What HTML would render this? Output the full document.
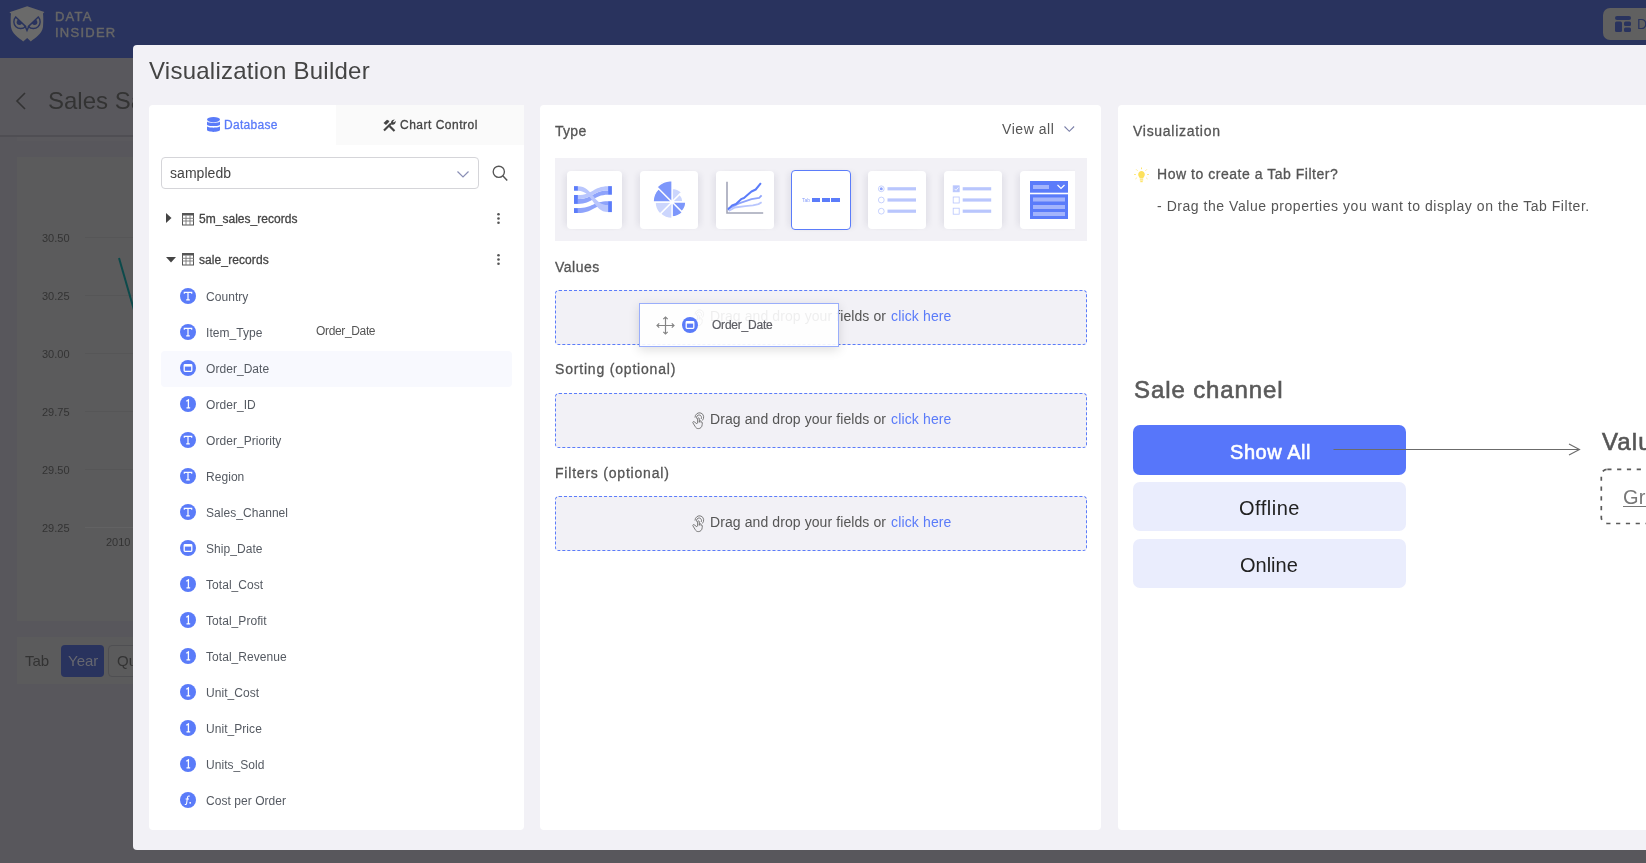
<!DOCTYPE html>
<html><head><meta charset="utf-8">
<style>
*{box-sizing:border-box;margin:0;padding:0}
html,body{width:1646px;height:863px;overflow:hidden}
body{position:relative;background:#58575c;font-family:"Liberation Sans",sans-serif;color:#444}
.a{position:absolute}
.t{position:absolute;white-space:nowrap;will-change:transform}
svg{display:block;overflow:visible}
</style></head><body>

<div class="a" style="left:0px;top:0px;width:1646px;height:58px;background:#29335e"></div>
<svg class="a" style="left:9px;top:6px;" width="36" height="37" viewBox="0 0 36 37"><defs><clipPath id="ce1"><path d="M6.7 11.1 A6 6 0 1 0 16.5 20.4Z"/></clipPath><clipPath id="ce2"><path d="M29.3 11.1 A6 6 0 1 1 19.5 20.4Z"/></clipPath></defs>
<path d="M18.2 0.2 L35.4 6 L34 7.5 C34.5 12 34.3 18 34 21 C33 28 26 32 21.8 35.4 L18.2 32 L14.2 35.4 C10 32 3 28 2 21 C1.7 18 1.5 12 2 7.5 L0.4 6.2 Z" fill="#6a6a6a"/>
<path d="M6.7 11.1 A6 6 0 1 0 16.5 20.4Z" fill="none" stroke="#29335e" stroke-width="1.4"/>
<path d="M29.3 11.1 A6 6 0 1 1 19.5 20.4Z" fill="none" stroke="#29335e" stroke-width="1.4"/>
<circle cx="10.4" cy="16.2" r="2.7" fill="#29335e" clip-path="url(#ce1)"/>
<circle cx="25.6" cy="16.2" r="2.7" fill="#29335e" clip-path="url(#ce2)"/>
<path d="M16 20 L18 24.4 L20 20" fill="none" stroke="#29335e" stroke-width="1.5"/></svg>
<div class="t" style="left:54.50px;top:10.30px;font-size:13px;line-height:13px;color:#666;-webkit-text-stroke:0.45px #666;letter-spacing:1.2px;">DATA</div>
<div class="t" style="left:54.50px;top:26.40px;font-size:13px;line-height:13px;color:#666;-webkit-text-stroke:0.45px #666;letter-spacing:1.25px;">INSIDER</div>
<div class="a" style="left:1603px;top:8px;width:80px;height:32px;background:#606060;border-radius:7px"></div>
<svg class="a" style="left:1615px;top:16px;" width="16" height="16" viewBox="0 0 16 16"><rect x="0" y="0" width="16" height="4" rx="2" fill="#29335e"/>
<rect x="0" y="5.5" width="7" height="10.5" rx="1.5" fill="#29335e"/>
<rect x="9" y="5.5" width="7" height="4.5" rx="1.5" fill="#29335e"/>
<rect x="9" y="11.5" width="7" height="4.5" rx="1.5" fill="#29335e"/></svg>
<div class="t" style="left:1637.00px;top:17.15px;font-size:14px;line-height:14px;color:#29335e;">D</div>
<div class="a" style="left:0px;top:58px;width:1646px;height:78px;background:#59585d"></div>
<div class="a" style="left:0px;top:135px;width:1646px;height:2px;background:#4f4e53"></div>
<div class="a" style="left:17px;top:137px;width:1629px;height:4px;background:#5a595d"></div>
<svg class="a" style="left:15px;top:92px;" width="12" height="18" viewBox="0 0 12 18"><path d="M10 1 L2 9 L10 17" fill="none" stroke="#333" stroke-width="1.6"/></svg>
<div class="t" style="left:48.00px;top:88.68px;font-size:24px;line-height:24px;color:#333;">Sales Sa</div>
<div class="a" style="left:17px;top:157px;width:1629px;height:464px;background:#5b5b5c"></div>
<div class="t" style="left:42.00px;top:232.69px;font-size:11px;line-height:11px;color:#333;">30.50</div>
<div class="a" style="left:85px;top:237px;width:60px;height:1px;background:#565657"></div>
<div class="t" style="left:42.00px;top:290.69px;font-size:11px;line-height:11px;color:#333;">30.25</div>
<div class="a" style="left:85px;top:295px;width:60px;height:1px;background:#565657"></div>
<div class="t" style="left:42.00px;top:348.69px;font-size:11px;line-height:11px;color:#333;">30.00</div>
<div class="a" style="left:85px;top:353px;width:60px;height:1px;background:#565657"></div>
<div class="t" style="left:42.00px;top:406.69px;font-size:11px;line-height:11px;color:#333;">29.75</div>
<div class="a" style="left:85px;top:411px;width:60px;height:1px;background:#565657"></div>
<div class="t" style="left:42.00px;top:464.69px;font-size:11px;line-height:11px;color:#333;">29.50</div>
<div class="a" style="left:85px;top:469px;width:60px;height:1px;background:#565657"></div>
<div class="t" style="left:42.00px;top:522.69px;font-size:11px;line-height:11px;color:#333;">29.25</div>
<div class="a" style="left:85px;top:527px;width:60px;height:1px;background:#626263"></div>
<div class="t" style="left:106.00px;top:536.69px;font-size:11px;line-height:11px;color:#333;">2010</div>
<svg class="a" style="left:110px;top:250px;" width="30" height="70" viewBox="0 0 30 70"><path d="M9 8 L24 60" stroke="#0c4a4b" stroke-width="2"/></svg>
<div class="a" style="left:17px;top:637px;width:1629px;height:47px;background:#5b5b5c"></div>
<div class="t" style="left:25.00px;top:653.30px;font-size:15px;line-height:15px;color:#333;">Tab</div>
<div class="a" style="left:61px;top:645px;width:43px;height:32px;background:#29335e;border-radius:4px"></div>
<div class="t" style="left:68.00px;top:653.30px;font-size:15px;line-height:15px;color:#66676f;">Year</div>
<div class="a" style="left:108px;top:645px;width:60px;height:32px;border:1px solid #4f4f52;border-radius:4px"></div>
<div class="t" style="left:117.00px;top:653.30px;font-size:15px;line-height:15px;color:#333;">Qu</div>
<div class="a" style="left:133px;top:45px;width:1600px;height:805px;background:#f2f1f6;border-radius:4px"></div>
<div class="t" style="left:148.50px;top:58.68px;font-size:24px;line-height:24px;color:#444;letter-spacing:0.25px;">Visualization Builder</div>
<div class="a" style="left:149px;top:105px;width:375px;height:725px;background:#fff;border-radius:4px 0 4px 4px"></div>
<div class="a" style="left:540px;top:105px;width:561px;height:725px;background:#fff;border-radius:4px"></div>
<div class="a" style="left:1118px;top:105px;width:600px;height:725px;background:#fff;border-radius:4px"></div>
<div class="a" style="left:336px;top:105px;width:188px;height:40px;background:#fafafa"></div>
<svg class="a" style="left:207px;top:117px;" width="13" height="16" viewBox="0 0 13 16"><ellipse cx="6.5" cy="2.6" rx="6.5" ry="2.6" fill="#5a7bf9"/>
<path d="M0 4.2 C0 6.2 13 6.2 13 4.2 L13 7.4 C13 9.6 0 9.6 0 7.4Z" fill="#5a7bf9"/>
<path d="M0 9 C0 11.2 13 11.2 13 9 L13 12.8 C13 15.6 0 15.6 0 12.8Z" fill="#5a7bf9"/></svg>
<div class="t" style="left:224.30px;top:118.84px;font-size:12px;line-height:12px;color:#5a7bf9;-webkit-text-stroke:0.3px #5a7bf9;letter-spacing:0.31px;">Database</div>
<svg class="a" style="left:383px;top:118.5px;" width="13" height="12.5" viewBox="0 0 13 12.5"><path d="M1 11.5 L8 4.5" stroke="#444" stroke-width="2.2"/>
<path d="M6.5 7 L11.5 12" stroke="#444" stroke-width="2.2"/>
<path d="M0.5 4 L4 0.8 L6.5 2 L5.5 3.5 L3 6Z" fill="#444"/>
<path d="M8.5 5.5 C7.2 3.5 8.5 0.5 11.8 0.6 L10 2.6 L10.8 3.5 L12.7 1.8 C13 5 10.5 6.5 8.5 5.5Z" fill="#444"/></svg>
<div class="t" style="left:399.70px;top:118.64px;font-size:12px;line-height:12px;color:#444;-webkit-text-stroke:0.3px #444;letter-spacing:0.5px;">Chart Control</div>
<div class="a" style="left:161px;top:157px;width:318px;height:32px;border:1px solid #d5d5d9;border-radius:4px;background:#fff"></div>
<div class="t" style="left:169.50px;top:166.15px;font-size:14px;line-height:14px;color:#444;letter-spacing:0.05px;">sampledb</div>
<svg class="a" style="left:457px;top:170.5px;" width="12" height="6.5" viewBox="0 0 12 6.5"><path d="M0.5 0.5 L6 6 L11.5 0.5" fill="none" stroke="#8a8fb5" stroke-width="1.2"/></svg>
<svg class="a" style="left:491.5px;top:164.6px;" width="16" height="16" viewBox="0 0 16 16"><circle cx="6.8" cy="6.8" r="5.6" fill="none" stroke="#555" stroke-width="1.35"/><path d="M10.8 10.8 L15.2 15.4" stroke="#555" stroke-width="1.5"/></svg>
<svg class="a" style="left:166px;top:213px;" width="6" height="10" viewBox="0 0 6 10"><path d="M0 0 L5.5 5 L0 10Z" fill="#444"/></svg>
<svg class="a" style="left:166px;top:257px;" width="10" height="6" viewBox="0 0 10 6"><path d="M0 0 L10 0 L5 5.5Z" fill="#444"/></svg>
<svg class="a" style="left:182px;top:212.6px;" width="12" height="12.5" viewBox="0 0 12 12.5"><rect x="0.5" y="0.5" width="11" height="11.5" fill="none" stroke="#555" stroke-width="1"/>
<rect x="0" y="0" width="12" height="2.5" fill="#555"/>
<path d="M0 5.3 H12 M0 8 H12 M4 2.5 V12 M8 2.5 V12" stroke="#777" stroke-width="0.9"/></svg>
<svg class="a" style="left:182px;top:253.4px;" width="12" height="12.5" viewBox="0 0 12 12.5"><rect x="0.5" y="0.5" width="11" height="11.5" fill="none" stroke="#555" stroke-width="1"/>
<rect x="0" y="0" width="12" height="2.5" fill="#555"/>
<path d="M0 5.3 H12 M0 8 H12 M4 2.5 V12 M8 2.5 V12" stroke="#777" stroke-width="0.9"/></svg>
<div class="t" style="left:198.50px;top:212.84px;font-size:12px;line-height:12px;color:#444;-webkit-text-stroke:0.3px #444;letter-spacing:0.03px;">5m_sales_records</div>
<div class="t" style="left:198.50px;top:253.84px;font-size:12px;line-height:12px;color:#444;-webkit-text-stroke:0.3px #444;letter-spacing:0.09px;">sale_records</div>
<svg class="a" style="left:496.5px;top:213.4px;" width="3" height="11" viewBox="0 0 3 11"><circle cx="1.5" cy="1.3" r="1.3" fill="#555"/><circle cx="1.5" cy="5.5" r="1.3" fill="#555"/><circle cx="1.5" cy="9.7" r="1.3" fill="#555"/></svg>
<svg class="a" style="left:496.5px;top:254.4px;" width="3" height="11" viewBox="0 0 3 11"><circle cx="1.5" cy="1.3" r="1.3" fill="#555"/><circle cx="1.5" cy="5.5" r="1.3" fill="#555"/><circle cx="1.5" cy="9.7" r="1.3" fill="#555"/></svg>
<div class="a" style="left:161px;top:351px;width:351px;height:36px;background:#f8f9fe;border-radius:4px"></div>
<svg class="a" style="left:180px;top:288.0px;" width="16" height="16" viewBox="0 0 16 16"><circle cx="8" cy="8" r="8" fill="#5a7bf9"/><path d="M4.3 5.8 V4.3 H11.7 V5.8 M8 4.3 V11.8 M6.2 11.8 H9.8" fill="none" stroke="#fff" stroke-width="1.2"/></svg>
<div class="t" style="left:205.50px;top:291.14px;font-size:12px;line-height:12px;color:#555a62;letter-spacing:0.05px;">Country</div>
<svg class="a" style="left:180px;top:324.0px;" width="16" height="16" viewBox="0 0 16 16"><circle cx="8" cy="8" r="8" fill="#5a7bf9"/><path d="M4.3 5.8 V4.3 H11.7 V5.8 M8 4.3 V11.8 M6.2 11.8 H9.8" fill="none" stroke="#fff" stroke-width="1.2"/></svg>
<div class="t" style="left:205.50px;top:327.14px;font-size:12px;line-height:12px;color:#555a62;letter-spacing:0.05px;">Item_Type</div>
<svg class="a" style="left:180px;top:360.0px;" width="16" height="16" viewBox="0 0 16 16"><circle cx="8" cy="8" r="8" fill="#5a7bf9"/><rect x="4.2" y="4.6" width="7.6" height="6.8" rx="0.8" fill="none" stroke="#fff" stroke-width="1.3"/><rect x="4.2" y="4.6" width="7.6" height="2" fill="#fff"/></svg>
<div class="t" style="left:205.50px;top:363.14px;font-size:12px;line-height:12px;color:#555a62;letter-spacing:0.05px;">Order_Date</div>
<svg class="a" style="left:180px;top:396.0px;" width="16" height="16" viewBox="0 0 16 16"><circle cx="8" cy="8" r="8" fill="#5a7bf9"/><path d="M6.3 5.3 L8.4 4 V11.8 M6.5 11.8 H10.2" fill="none" stroke="#fff" stroke-width="1.3"/></svg>
<div class="t" style="left:205.50px;top:399.14px;font-size:12px;line-height:12px;color:#555a62;letter-spacing:0.05px;">Order_ID</div>
<svg class="a" style="left:180px;top:432.0px;" width="16" height="16" viewBox="0 0 16 16"><circle cx="8" cy="8" r="8" fill="#5a7bf9"/><path d="M4.3 5.8 V4.3 H11.7 V5.8 M8 4.3 V11.8 M6.2 11.8 H9.8" fill="none" stroke="#fff" stroke-width="1.2"/></svg>
<div class="t" style="left:205.50px;top:435.14px;font-size:12px;line-height:12px;color:#555a62;letter-spacing:0.05px;">Order_Priority</div>
<svg class="a" style="left:180px;top:468.0px;" width="16" height="16" viewBox="0 0 16 16"><circle cx="8" cy="8" r="8" fill="#5a7bf9"/><path d="M4.3 5.8 V4.3 H11.7 V5.8 M8 4.3 V11.8 M6.2 11.8 H9.8" fill="none" stroke="#fff" stroke-width="1.2"/></svg>
<div class="t" style="left:205.50px;top:471.14px;font-size:12px;line-height:12px;color:#555a62;letter-spacing:0.05px;">Region</div>
<svg class="a" style="left:180px;top:503.99999999999994px;" width="16" height="16" viewBox="0 0 16 16"><circle cx="8" cy="8" r="8" fill="#5a7bf9"/><path d="M4.3 5.8 V4.3 H11.7 V5.8 M8 4.3 V11.8 M6.2 11.8 H9.8" fill="none" stroke="#fff" stroke-width="1.2"/></svg>
<div class="t" style="left:205.50px;top:507.14px;font-size:12px;line-height:12px;color:#555a62;letter-spacing:0.05px;">Sales_Channel</div>
<svg class="a" style="left:180px;top:540.0px;" width="16" height="16" viewBox="0 0 16 16"><circle cx="8" cy="8" r="8" fill="#5a7bf9"/><rect x="4.2" y="4.6" width="7.6" height="6.8" rx="0.8" fill="none" stroke="#fff" stroke-width="1.3"/><rect x="4.2" y="4.6" width="7.6" height="2" fill="#fff"/></svg>
<div class="t" style="left:205.50px;top:543.14px;font-size:12px;line-height:12px;color:#555a62;letter-spacing:0.05px;">Ship_Date</div>
<svg class="a" style="left:180px;top:576.0px;" width="16" height="16" viewBox="0 0 16 16"><circle cx="8" cy="8" r="8" fill="#5a7bf9"/><path d="M6.3 5.3 L8.4 4 V11.8 M6.5 11.8 H10.2" fill="none" stroke="#fff" stroke-width="1.3"/></svg>
<div class="t" style="left:205.50px;top:579.14px;font-size:12px;line-height:12px;color:#555a62;letter-spacing:0.05px;">Total_Cost</div>
<svg class="a" style="left:180px;top:612.0px;" width="16" height="16" viewBox="0 0 16 16"><circle cx="8" cy="8" r="8" fill="#5a7bf9"/><path d="M6.3 5.3 L8.4 4 V11.8 M6.5 11.8 H10.2" fill="none" stroke="#fff" stroke-width="1.3"/></svg>
<div class="t" style="left:205.50px;top:615.14px;font-size:12px;line-height:12px;color:#555a62;letter-spacing:0.05px;">Total_Profit</div>
<svg class="a" style="left:180px;top:648.0px;" width="16" height="16" viewBox="0 0 16 16"><circle cx="8" cy="8" r="8" fill="#5a7bf9"/><path d="M6.3 5.3 L8.4 4 V11.8 M6.5 11.8 H10.2" fill="none" stroke="#fff" stroke-width="1.3"/></svg>
<div class="t" style="left:205.50px;top:651.14px;font-size:12px;line-height:12px;color:#555a62;letter-spacing:0.05px;">Total_Revenue</div>
<svg class="a" style="left:180px;top:684.0px;" width="16" height="16" viewBox="0 0 16 16"><circle cx="8" cy="8" r="8" fill="#5a7bf9"/><path d="M6.3 5.3 L8.4 4 V11.8 M6.5 11.8 H10.2" fill="none" stroke="#fff" stroke-width="1.3"/></svg>
<div class="t" style="left:205.50px;top:687.14px;font-size:12px;line-height:12px;color:#555a62;letter-spacing:0.05px;">Unit_Cost</div>
<svg class="a" style="left:180px;top:720.0px;" width="16" height="16" viewBox="0 0 16 16"><circle cx="8" cy="8" r="8" fill="#5a7bf9"/><path d="M6.3 5.3 L8.4 4 V11.8 M6.5 11.8 H10.2" fill="none" stroke="#fff" stroke-width="1.3"/></svg>
<div class="t" style="left:205.50px;top:723.14px;font-size:12px;line-height:12px;color:#555a62;letter-spacing:0.05px;">Unit_Price</div>
<svg class="a" style="left:180px;top:756.0px;" width="16" height="16" viewBox="0 0 16 16"><circle cx="8" cy="8" r="8" fill="#5a7bf9"/><path d="M6.3 5.3 L8.4 4 V11.8 M6.5 11.8 H10.2" fill="none" stroke="#fff" stroke-width="1.3"/></svg>
<div class="t" style="left:205.50px;top:759.14px;font-size:12px;line-height:12px;color:#555a62;letter-spacing:0.05px;">Units_Sold</div>
<svg class="a" style="left:180px;top:792.0px;" width="16" height="16" viewBox="0 0 16 16"><circle cx="8" cy="8" r="8" fill="#5a7bf9"/><path d="M9.8 4.2 C8.2 3.6 7.6 4.6 7.4 6 L6.6 11.5 C6.4 12.6 5.6 12.6 4.8 12.2 M5.6 7 H9" fill="none" stroke="#fff" stroke-width="1.1"/><circle cx="10.2" cy="10.8" r="0.9" fill="#fff"/></svg>
<div class="t" style="left:205.50px;top:795.14px;font-size:12px;line-height:12px;color:#555a62;letter-spacing:0.05px;">Cost per Order</div>
<div class="t" style="left:316.30px;top:324.84px;font-size:12px;line-height:12px;color:#555;letter-spacing:-0.35px;">Order_Date</div>
<div class="t" style="left:555.00px;top:124.15px;font-size:14px;line-height:14px;color:#555;-webkit-text-stroke:0.3px #555;letter-spacing:0.27px;">Type</div>
<div class="t" style="left:1001.70px;top:121.95px;font-size:14px;line-height:14px;color:#555;letter-spacing:0.55px;">View all</div>
<svg class="a" style="left:1063.5px;top:126.3px;" width="11" height="6" viewBox="0 0 11 6"><path d="M0.5 0.5 L5.3 5.3 L10.1 0.5" fill="none" stroke="#7a7fa8" stroke-width="1.1"/></svg>
<div class="a" style="left:555px;top:158px;width:532px;height:83px;background:#f2f1f6"></div>
<div class="a" style="left:555px;top:158px;width:520px;height:83px;overflow:hidden">
<div class="a" style="left:12px;top:13px;width:55px;height:58px;background:#fff;border-radius:4px;box-shadow:5px 0 6px -3px rgba(30,30,70,0.09),-5px 0 6px -3px rgba(30,30,70,0.09);"></div>
<div class="a" style="left:85px;top:13px;width:58px;height:58px;background:#fff;border-radius:4px;box-shadow:5px 0 6px -3px rgba(30,30,70,0.09),-5px 0 6px -3px rgba(30,30,70,0.09);"></div>
<div class="a" style="left:161px;top:13px;width:58px;height:58px;background:#fff;border-radius:4px;box-shadow:5px 0 6px -3px rgba(30,30,70,0.09),-5px 0 6px -3px rgba(30,30,70,0.09);"></div>
<div class="a" style="left:236px;top:12.3px;width:59.5px;height:59.5px;background:#fff;border-radius:4px;box-shadow:5px 0 6px -3px rgba(30,30,70,0.09),-5px 0 6px -3px rgba(30,30,70,0.09);border:1.5px solid #5b7cfa;"></div>
<div class="a" style="left:313px;top:13px;width:58px;height:58px;background:#fff;border-radius:4px;box-shadow:5px 0 6px -3px rgba(30,30,70,0.09),-5px 0 6px -3px rgba(30,30,70,0.09);"></div>
<div class="a" style="left:389px;top:13px;width:58px;height:58px;background:#fff;border-radius:4px;box-shadow:5px 0 6px -3px rgba(30,30,70,0.09),-5px 0 6px -3px rgba(30,30,70,0.09);"></div>
<div class="a" style="left:464.5px;top:13px;width:58px;height:58px;background:#fff;border-radius:4px;box-shadow:5px 0 6px -3px rgba(30,30,70,0.09),-5px 0 6px -3px rgba(30,30,70,0.09);"></div>
</div>
<svg class="a" style="left:574px;top:186px;" width="38" height="27" viewBox="0 0 38 27"><path d="M3.9 13 C19.0 13 19.0 4.4 34.1 4.4 L34.1 8.7 C19.0 8.7 19.0 17.9 3.9 17.9Z" fill="#8ea3fb"/><path d="M3.9 22.1 C19.0 22.1 19.0 15.2 34.1 15.2 L34.1 19 C19.0 19 19.0 27 3.9 27Z" fill="#8ea3fb"/><path d="M3.9 0.13 C19.0 0.13 19.0 19 34.1 19 L34.1 26 C19.0 26 19.0 4.7 3.9 4.7Z" fill="#b9c6fd"/><path d="M3.9 9 C19.0 9 19.0 0.13 34.1 0.13 L34.1 4.4 C19.0 4.4 19.0 13 3.9 13Z" fill="#b9c6fd"/><rect x="0" y="0.13" width="3.9" height="4.6" fill="#5b7cfa"/>
<rect x="0" y="9" width="3.9" height="8.9" fill="#5b7cfa"/>
<rect x="0" y="22.1" width="3.9" height="4.9" fill="#5b7cfa"/>
<rect x="34.1" y="0.13" width="3.8" height="8.6" fill="#5b7cfa"/>
<rect x="34.1" y="15.2" width="3.8" height="10.9" fill="#5b7cfa"/></svg>
<svg class="a" style="left:652px;top:180px;" width="40" height="44" viewBox="0 0 40 44"><path d="M20 22 L20.00 8.30 A13.7 13.7 0 0 1 29.69 12.31Z" fill="#ccd6fd" stroke="#fff" stroke-width="1.3"/><path d="M20 22 L27.78 14.22 A11 11 0 0 1 31.00 22.00Z" fill="#ccd6fd" stroke="#fff" stroke-width="1.3"/><path d="M20 22 L33.80 22.00 A13.8 13.8 0 0 1 29.76 31.76Z" fill="#7d97fb" stroke="#fff" stroke-width="1.3"/><path d="M20 22 L30.47 32.47 A14.8 14.8 0 0 1 20.00 36.80Z" fill="#7d97fb" stroke="#fff" stroke-width="1.3"/><path d="M20 22 L20.00 38.50 A16.5 16.5 0 0 1 8.33 33.67Z" fill="#ccd6fd" stroke="#fff" stroke-width="1.3"/><path d="M20 22 L7.98 34.02 A17 17 0 0 1 3.00 22.00Z" fill="#ccd6fd" stroke="#fff" stroke-width="1.3"/><path d="M20 22 L1.10 22.00 A18.9 18.9 0 0 1 6.64 8.64Z" fill="#7d97fb" stroke="#fff" stroke-width="1.3"/><path d="M20 22 L4.94 6.94 A21.3 21.3 0 0 1 20.00 0.70Z" fill="#7d97fb" stroke="#fff" stroke-width="1.3"/></svg>
<svg class="a" style="left:725px;top:180px;" width="40" height="35" viewBox="0 0 40 35"><path d="M2 1.8 V33 H38.2" fill="none" stroke="#a3a6b8" stroke-width="1.6"/>
<path d="M3.6 31 L9.9 27.5 L20.3 26.1 L27.9 25.4 L33.5 24.1 L36.6 22.3" fill="none" stroke="#b9c6fd" stroke-width="1.8" stroke-linejoin="round"/>
<path d="M2.9 28.9 L14 23.4 L26.5 19.2 L34.2 17.8 L36.6 15.4" fill="none" stroke="#8ea3fb" stroke-width="1.8" stroke-linejoin="round"/>
<path d="M2.9 29.6 L7.1 25.4 L11 24 L16.1 19.2 L19 18 L22.4 15 L26.5 11.5 L30.7 9.5 L35.9 3.2" fill="none" stroke="#5b7cfa" stroke-width="2" stroke-linejoin="round"/></svg>
<div class="t" style="left:802.00px;top:198.27px;font-size:5px;line-height:5px;color:#8aa0fb;">Tab</div>
<div class="a" style="left:811.5px;top:198.4px;width:8.5px;height:3.7px;background:#5b7cfa"></div>
<div class="a" style="left:821.5px;top:198.4px;width:8.5px;height:3.7px;background:#5b7cfa"></div>
<div class="a" style="left:831.3px;top:198.4px;width:8.7px;height:3.7px;background:#5b7cfa"></div>
<svg class="a" style="left:866px;top:180px;" width="40" height="40" viewBox="0 0 40 40"><circle cx="15.299999999999955" cy="8.800000000000011" r="2.9" fill="none" stroke="#b9c6fd" stroke-width="0.8"/><circle cx="15.299999999999955" cy="8.800000000000011" r="1.5" fill="#8ea3fb"/><rect x="21.5" y="7.200000000000012" width="28.5" height="3.2" fill="#b9c6fd"/><circle cx="15.299999999999955" cy="20" r="2.9" fill="none" stroke="#b9c6fd" stroke-width="0.8"/><rect x="21.5" y="18.4" width="28.5" height="3.2" fill="#b9c6fd"/><circle cx="15.299999999999955" cy="31.19999999999999" r="2.9" fill="none" stroke="#b9c6fd" stroke-width="0.8"/><rect x="21.5" y="29.599999999999987" width="28.5" height="3.2" fill="#b9c6fd"/></svg>
<svg class="a" style="left:942px;top:180px;" width="50" height="40" viewBox="0 0 50 40"><rect x="11.2" y="5.800000000000011" width="6" height="6" fill="#b9c6fd" stroke="#b9c6fd" stroke-width="0.8"/><path d="M12.5 8.800000000000011 L14 10.300000000000011 L16.5 7.300000000000011" fill="none" stroke="#fff" stroke-width="0.8"/><rect x="20.7" y="7.200000000000012" width="28.5" height="3.2" fill="#b9c6fd"/><rect x="11.2" y="17" width="6" height="6" fill="none" stroke="#b9c6fd" stroke-width="0.8"/><rect x="20.7" y="18.4" width="28.5" height="3.2" fill="#b9c6fd"/><rect x="11.2" y="28.19999999999999" width="6" height="6" fill="none" stroke="#b9c6fd" stroke-width="0.8"/><rect x="20.7" y="29.599999999999987" width="28.5" height="3.2" fill="#b9c6fd"/></svg>
<svg class="a" style="left:1030px;top:181px;" width="38" height="38" viewBox="0 0 38 38"><rect x="0" y="0" width="38" height="11.7" fill="#5b7cfa"/>
<rect x="0" y="13.3" width="38" height="24.7" fill="#5b7cfa"/>
<rect x="3" y="4" width="16" height="4" fill="#a3b4fc"/>
<path d="M27.5 4 L31 7.5 L34.5 4" fill="none" stroke="#fff" stroke-width="1.2"/>
<rect x="3" y="16.5" width="32" height="4" fill="#a3b4fc"/>
<rect x="3" y="24" width="32" height="4" fill="#a3b4fc"/>
<rect x="3" y="31" width="32" height="4" fill="#a3b4fc"/></svg>
<div class="t" style="left:555.00px;top:259.55px;font-size:14px;line-height:14px;color:#555;-webkit-text-stroke:0.3px #555;letter-spacing:0.5px;">Values</div>
<div class="t" style="left:555.00px;top:362.35px;font-size:14px;line-height:14px;color:#555;-webkit-text-stroke:0.3px #555;letter-spacing:0.81px;">Sorting (optional)</div>
<div class="t" style="left:555.00px;top:465.55px;font-size:14px;line-height:14px;color:#555;-webkit-text-stroke:0.3px #555;letter-spacing:0.79px;">Filters (optional)</div>
<div class="a" style="left:555px;top:290px;width:532px;height:55px;background:#f2f1f6;border:1px dashed #5b7cfa;border-radius:4px"></div>
<svg class="a" style="left:692px;top:308.7px;" width="12" height="17" viewBox="0 0 12 17"><g fill="none" stroke="#666" stroke-width="0.85" stroke-linecap="round" stroke-linejoin="round">
<path d="M3 5.2 A4.4 4.4 0 1 1 10.6 8.2"/>
<path d="M4.5 6.2 A2.6 2.6 0 1 1 9.4 6.6"/>
<path d="M5.6 11 V6.6 C5.6 5.6 7.3 5.6 7.3 6.6 V10.2 M7.3 9.2 C7.5 8.4 8.7 8.4 8.9 9.2 L9.1 10.4 C9.3 9.8 10.3 9.9 10.3 10.8 L10.2 12.6 C10 15 8.6 16.6 6.3 16.6 C4.8 16.6 3.8 15.8 3.1 14.4 L0.9 10.8 C0.5 10 1.4 9.2 2.2 9.8 L4.6 11.6"/>
</g></svg>
<div class="t" style="left:710.00px;top:308.65px;font-size:14px;line-height:14px;color:#555;letter-spacing:0.09px;">Drag and drop your fields or</div>
<div class="t" style="left:891.30px;top:308.65px;font-size:14px;line-height:14px;color:#5a7bf9;letter-spacing:0.14px;">click here</div>
<div class="a" style="left:555px;top:393px;width:532px;height:55px;background:#f2f1f6;border:1px dashed #5b7cfa;border-radius:4px"></div>
<svg class="a" style="left:692px;top:412.09999999999997px;" width="12" height="17" viewBox="0 0 12 17"><g fill="none" stroke="#666" stroke-width="0.85" stroke-linecap="round" stroke-linejoin="round">
<path d="M3 5.2 A4.4 4.4 0 1 1 10.6 8.2"/>
<path d="M4.5 6.2 A2.6 2.6 0 1 1 9.4 6.6"/>
<path d="M5.6 11 V6.6 C5.6 5.6 7.3 5.6 7.3 6.6 V10.2 M7.3 9.2 C7.5 8.4 8.7 8.4 8.9 9.2 L9.1 10.4 C9.3 9.8 10.3 9.9 10.3 10.8 L10.2 12.6 C10 15 8.6 16.6 6.3 16.6 C4.8 16.6 3.8 15.8 3.1 14.4 L0.9 10.8 C0.5 10 1.4 9.2 2.2 9.8 L4.6 11.6"/>
</g></svg>
<div class="t" style="left:710.00px;top:412.05px;font-size:14px;line-height:14px;color:#555;letter-spacing:0.09px;">Drag and drop your fields or</div>
<div class="t" style="left:891.30px;top:412.05px;font-size:14px;line-height:14px;color:#5a7bf9;letter-spacing:0.14px;">click here</div>
<div class="a" style="left:555px;top:496px;width:532px;height:55px;background:#f2f1f6;border:1px dashed #5b7cfa;border-radius:4px"></div>
<svg class="a" style="left:692px;top:515.0px;" width="12" height="17" viewBox="0 0 12 17"><g fill="none" stroke="#666" stroke-width="0.85" stroke-linecap="round" stroke-linejoin="round">
<path d="M3 5.2 A4.4 4.4 0 1 1 10.6 8.2"/>
<path d="M4.5 6.2 A2.6 2.6 0 1 1 9.4 6.6"/>
<path d="M5.6 11 V6.6 C5.6 5.6 7.3 5.6 7.3 6.6 V10.2 M7.3 9.2 C7.5 8.4 8.7 8.4 8.9 9.2 L9.1 10.4 C9.3 9.8 10.3 9.9 10.3 10.8 L10.2 12.6 C10 15 8.6 16.6 6.3 16.6 C4.8 16.6 3.8 15.8 3.1 14.4 L0.9 10.8 C0.5 10 1.4 9.2 2.2 9.8 L4.6 11.6"/>
</g></svg>
<div class="t" style="left:710.00px;top:514.95px;font-size:14px;line-height:14px;color:#555;letter-spacing:0.09px;">Drag and drop your fields or</div>
<div class="t" style="left:891.30px;top:514.95px;font-size:14px;line-height:14px;color:#5a7bf9;letter-spacing:0.14px;">click here</div>
<div class="a" style="left:639px;top:303px;width:200px;height:43.5px;background:rgba(255,255,255,0.9);border:1px solid #9aaefb;box-shadow:0 3px 10px rgba(0,0,0,0.13)"></div>
<svg class="a" style="left:656px;top:315.5px;" width="19" height="19" viewBox="0 0 19 19"><path d="M9.5 1 V18 M1 9.5 H18" stroke="#858585" stroke-width="1.2"/>
<path d="M7.3 3.2 L9.5 1 L11.7 3.2 M7.3 15.8 L9.5 18 L11.7 15.8 M3.2 7.3 L1 9.5 L3.2 11.7 M15.8 7.3 L18 9.5 L15.8 11.7" fill="none" stroke="#858585" stroke-width="1.2"/></svg>
<svg class="a" style="left:682px;top:316.5px;" width="16" height="16" viewBox="0 0 16 16"><circle cx="8" cy="8" r="8" fill="#5a7bf9"/><rect x="4.2" y="4.6" width="7.6" height="6.8" rx="0.8" fill="none" stroke="#fff" stroke-width="1.3"/><rect x="4.2" y="4.6" width="7.6" height="2" fill="#fff"/></svg>
<div class="t" style="left:712.30px;top:318.84px;font-size:12px;line-height:12px;color:#5c5d63;-webkit-text-stroke:0.2px #5c5d63;letter-spacing:-0.22px;">Order_Date</div>
<div class="t" style="left:1133.30px;top:124.15px;font-size:14px;line-height:14px;color:#555;-webkit-text-stroke:0.3px #555;letter-spacing:0.72px;">Visualization</div>
<svg class="a" style="left:1132.5px;top:166.5px;" width="17" height="17" viewBox="0 0 17 17"><path d="M8.5 0.5 V2.2 M1.2 7.5 H2.8 M14.2 7.5 H15.8 M3.3 2.5 L4.4 3.6 M13.7 2.5 L12.6 3.6 M2.6 11.8 L3.6 11 M14.4 11.8 L13.4 11" stroke="#fde15b" stroke-width="0.9"/>
<path d="M5.2 7.6 C5.2 5.4 6.8 4 8.5 4 C10.2 4 11.8 5.4 11.8 7.6 C11.8 9.4 10.4 10.2 10.2 11.6 H6.8 C6.6 10.2 5.2 9.4 5.2 7.6Z" fill="#fde15b"/>
<rect x="6.8" y="12.3" width="3.4" height="1.2" fill="#fde15b"/><rect x="7.3" y="14.1" width="2.4" height="1.1" fill="#fde15b"/></svg>
<div class="t" style="left:1157.00px;top:167.15px;font-size:14px;line-height:14px;color:#555;-webkit-text-stroke:0.3px #555;letter-spacing:0.53px;">How to create a Tab Filter?</div>
<div class="t" style="left:1156.70px;top:199.35px;font-size:14px;line-height:14px;color:#555;letter-spacing:0.54px;">- Drag the Value properties you want to display on the Tab Filter.</div>
<div class="t" style="left:1133.50px;top:378.48px;font-size:24px;line-height:24px;color:#5a5a5a;-webkit-text-stroke:0.6px #5a5a5a;letter-spacing:0.9px;">Sale channel</div>
<div class="a" style="left:1133px;top:425px;width:273px;height:50px;background:#5776fa;border-radius:7px"></div>
<div class="t" style="left:1229.80px;top:441.87px;font-size:20px;line-height:20px;color:#fff;-webkit-text-stroke:0.6px #fff;letter-spacing:0.55px;">Show All</div>
<div class="a" style="left:1133px;top:482px;width:273px;height:49px;background:#eaedfd;border-radius:7px"></div>
<div class="t" style="left:1239.00px;top:498.47px;font-size:20px;line-height:20px;color:#222;letter-spacing:0.5px;">Offline</div>
<div class="a" style="left:1133px;top:539px;width:273px;height:49px;background:#eaedfd;border-radius:7px"></div>
<div class="t" style="left:1240.30px;top:554.77px;font-size:20px;line-height:20px;color:#222;">Online</div>
<svg class="a" style="left:1333px;top:443px;" width="248" height="13" viewBox="0 0 248 13"><path d="M0.5 6.5 H246.5" stroke="#6b6b6b" stroke-width="1.1"/><path d="M236 1 L246.5 6.5 L236 12" fill="none" stroke="#6b6b6b" stroke-width="1.1"/></svg>
<div class="t" style="left:1602.00px;top:429.58px;font-size:24px;line-height:24px;color:#555;-webkit-text-stroke:0.6px #555;letter-spacing:1.1px;">Valu</div>
<svg class="a" style="left:1600px;top:468px;" width="100" height="57" viewBox="0 0 100 57"><rect x="1.3" y="1.3" width="96" height="54.2" rx="6" fill="none" stroke="#5a5a5a" stroke-width="1.7" stroke-dasharray="4.2 5.6"/></svg>
<div class="t" style="left:1623.00px;top:487.07px;font-size:20px;line-height:20px;color:#777;letter-spacing:0.3px;text-decoration:underline;text-decoration-thickness:1px;text-underline-offset:2px">Gro</div>
</body></html>
